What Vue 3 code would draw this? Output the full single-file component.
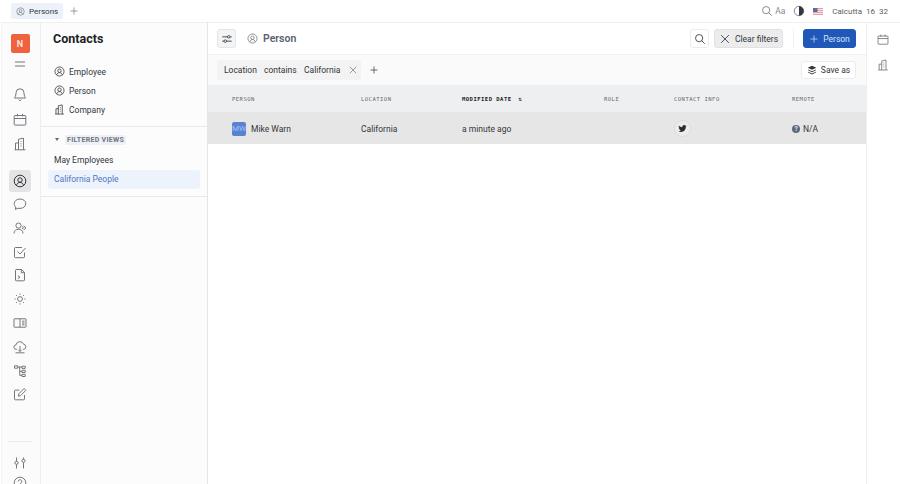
<script setup>
const railTop = [
  { name: 'bell', d: 'M7 1.8a4 4 0 0 0-4 4c0 3.4-1.2 4.6-1.7 5.2h11.400c-.5-.6-1.700-1.800-1.700-5.200a4 4 0 0 0-4-4zM5.700 12.600a1.400 1.400 0 0 0 2.600 0' },
  { name: 'calendar', d: 'M2 3.500h10a.8.8 0 0 1 .8.8v8a.8.8 0 0 1-.8.8H2a.8.8 0 0 1-.8-.8v-8a.8.8 0 0 1 .8-.8zM1.200 6.500h11.600M4.500 1.800v2.600M9.500 1.800v2.600' },
  { name: 'building', d: 'M5.500 12.800V2.200l5-1v11.600M5.500 6H2.500v6.800M1.500 12.800h11M7.500 4.500h1M7.500 6.800h1M7.500 9.100h1' },
]
const railMain = [
  { name: 'chat', d: 'M7 2C3.700 2 1.200 4 1.200 6.700c0 1.300.6 2.500 1.700 3.300L2.300 12.400l2.700-1.200c.6.200 1.300.2 2 .2 3.300 0 5.800-2 5.800-4.700S10.300 2 7 2z' },
  { name: 'users', d: 'M5.500 2a2.600 2.600 0 1 0 0 5.200 2.600 2.600 0 0 0 0-5.200zM1 12.500c0-2.700 2-4.200 4.500-4.200s4.500 1.500 4.500 4.200M10.500 4.800l2.500 2-2.500 2.200M9 5.500l1.500 1.300L9 8' },
  { name: 'check', d: 'M11.500 7.500v4.300a.9.9 0 0 1-.9.9H2.400a.9.9 0 0 1-.9-.9V3.400a.9.9 0 0 1 .9-.9h6.600M4.500 6.500l2.500 2.500 5.500-6' },
  { name: 'file', d: 'M3 1.500h5.500L11.500 4.500v7.500a.8.8 0 0 1-.8.8H3.300a.8.8 0 0 1-.8-.8V2.300a.8.8 0 0 1 .5-.8zM8.300 1.500v3.200h3.200M4.800 7.800l2.200 1.400-2.200 1.500' },
  { name: 'sun', d: 'M7 4.600a2.400 2.400 0 1 0 0 4.800 2.400 2.400 0 0 0 0-4.800zM7 1.500v1.200M7 11.300v1.200M1.500 7h1.200M11.300 7h1.200M3.100 3.100l.9.9M10 10l.9.9M3.100 10.900l.9-.9M10 4l.9-.9' },
  { name: 'book', d: 'M1.500 2.800h11a.5.5 0 0 1 .5.5v7.400a.5.5 0 0 1-.5.5h-11a.5.5 0 0 1-.5-.5V3.300a.5.5 0 0 1 .5-.5zM7 2.800v8.400M9 5.200h2.500M9 7h2.500M9 8.800h2.500' },
  { name: 'cloud', d: 'M4 9.300H3.200a2.200 2.200 0 0 1-.2-4.400A3.900 3.900 0 0 1 10.500 4.200a2.600 2.600 0 0 1 .4 5.100H10M7 6v5.500M5.400 9.800L7 11.500l1.600-1.700M2.500 12.800h9' },
  { name: 'tree', d: 'M1.500 1.800h3.200v2.400H1.500zM9 2.200h3.200v2.200H9zM9 6.300h3.200v2.200H9zM9 10.300h3.200v2.200H9zM4.700 3h4.300M6.700 3v8.400H9M6.700 7.400H9' },
  { name: 'edit', d: 'M11.500 8v3.900a.9.900 0 0 1-.9.9H2.400a.9.900 0 0 1-.9-.9V4a.9.900 0 0 1 .9-.9h3.900M5.300 9.100l.5-2.300 5.300-5.300 1.800 1.800-5.300 5.300z' },
]
const personIcon = 'M7 1.200a5.800 5.800 0 1 0 0 11.600A5.800 5.800 0 0 0 7 1.200zM7 3.800a2.200 2.200 0 1 0 0 4.400 2.200 2.200 0 0 0 0-4.400zM3.400 11.400c.4-1.700 1.900-3 3.600-3s3.200 1.300 3.600 3'
const buildingIcon = 'M5.500 12.800V2.200l5-1v11.600M5.500 6H2.500v6.800M1.500 12.800h11M7.500 4.500h1M7.500 6.800h1M7.500 9.100h1'
const calendarIcon = 'M2 3.500h10a.8.8 0 0 1 .8.8v8a.8.8 0 0 1-.8.8H2a.8.8 0 0 1-.8-.8v-8a.8.8 0 0 1 .8-.8zM1.200 6.500h11.600M4.500 1.800v2.600M9.500 1.800v2.600'
const slidersIcon = 'M1.500 4.500h6M10.500 4.500h2M1.500 9.500h2M6.500 9.500h6M9 3a1.500 1.500 0 1 0 0 3 1.500 1.500 0 0 0 0-3zM5 8a1.500 1.500 0 1 0 0 3 1.500 1.500 0 0 0 0-3z'
const searchIcon = 'M6 1.800a4.200 4.200 0 1 0 0 8.400 4.200 4.200 0 0 0 0-8.400zM9.100 9.100l3.400 3.400'
const crossIcon = 'M2.500 2.500l9 9M11.500 2.500l-9 9'
const plusIcon = 'M7 2v10M2 7h10'
const views = [
  { label: 'Employee', icon: personIcon },
  { label: 'Person', icon: personIcon },
  { label: 'Company', icon: buildingIcon },
]
</script>

<template>
  <div class="page">
    <header class="topbar">
      <div class="tab">
        <svg class="ic12" viewBox="0 0 14 14"><path :d="personIcon" /></svg>
        <span>Persons</span>
      </div>
      <svg class="ic10 tab-plus" viewBox="0 0 14 14"><path :d="plusIcon" /></svg>
      <div class="top-right">
        <svg class="ic12" viewBox="0 0 14 14"><path :d="searchIcon" /></svg>
        <span class="aa">Aa</span>
        <svg class="ic12 contrast" viewBox="0 0 14 14">
          <circle cx="7" cy="7" r="5.500" />
          <path class="solid" d="M7 1.500a5.500 5.500 0 0 1 0 11z" />
        </svg>
        <svg class="flag" viewBox="0 0 10 7">
          <rect width="10" height="7" fill="#e2a0a6" />
          <rect y="1" width="10" height="1" fill="#f3e8e8" />
          <rect y="3" width="10" height="1" fill="#f3e8e8" />
          <rect y="5" width="10" height="1" fill="#f3e8e8" />
          <rect width="4.500" height="4" fill="#5d6d9c" />
        </svg>
        <div class="clock">
          <span>Calcutta</span>
          <span>16</span>
          <span>32</span>
        </div>
      </div>
    </header>

    <div class="shell">
      <nav class="rail">
        <div class="logo">N</div>
        <svg class="ic14 burger" viewBox="0 0 14 14"><path d="M2 5h10M2 9h10" /></svg>
        <div class="rail-group first">
          <svg v-for="i in railTop" :key="i.name" class="ic14" viewBox="0 0 14 14"><path :d="i.d" /></svg>
        </div>
        <div class="rail-active">
          <svg class="ic14 dark" viewBox="0 0 14 14"><path :d="personIcon" /></svg>
        </div>
        <div class="rail-group">
          <svg v-for="i in railMain" :key="i.name" class="ic14" viewBox="0 0 14 14"><path :d="i.d" /></svg>
        </div>
        <div class="rail-bottom">
          <svg class="ic14" viewBox="0 0 14 14"><path d="M3.500 1.500v4M3.500 8.500v4M10.500 1.500v2M10.500 6.500v6M3.500 5.200a1.600 1.600 0 1 0 0 3.200 1.600 1.600 0 0 0 0-3.200zM10.500 3.200a1.600 1.600 0 1 0 0 3.200 1.600 1.600 0 0 0 0-3.200z" /></svg>
          <svg class="ic14" viewBox="0 0 14 14"><path d="M7 1.200a5.800 5.800 0 1 0 0 11.600A5.800 5.800 0 0 0 7 1.200zM5.200 5.500a1.800 1.800 0 1 1 2.800 1.500c-.6.400-1 .8-1 1.500M7 10v.5" /></svg>
        </div>
      </nav>

      <aside class="sidebar">
        <h1>Contacts</h1>
        <ul class="side-list">
          <li v-for="v in views" :key="v.label">
            <svg class="ic12 dark" viewBox="0 0 14 14"><path :d="v.icon" /></svg>
            {{ v.label }}
          </li>
        </ul>
        <section class="filtered">
          <div class="filtered-head">
            <i class="caret"></i>
            <span>FILTERED VIEWS</span>
          </div>
          <div class="view-row">May Employees</div>
          <div class="view-row selected">California People</div>
        </section>
      </aside>

      <main class="main">
        <div class="toolbar">
          <button class="btn square tinted">
            <svg class="ic12 dark" viewBox="0 0 14 14"><path :d="slidersIcon" /></svg>
          </button>
          <svg class="ic12 title-icon" viewBox="0 0 14 14"><path :d="personIcon" /></svg>
          <span class="title">Person</span>
          <button class="btn square push">
            <svg class="ic12 dark" viewBox="0 0 14 14"><path :d="searchIcon" /></svg>
          </button>
          <button class="btn clear">
            <svg class="ic12 dark" viewBox="0 0 14 14"><path :d="crossIcon" /></svg>
            Clear filters
          </button>
          <span class="sep"></span>
          <button class="btn primary">
            <svg class="ic10 light" viewBox="0 0 14 14"><path :d="plusIcon" /></svg>
            Person
          </button>
        </div>

        <div class="filterbar">
          <div class="chip">
            <span class="chip-field">Location</span>
            <span class="chip-op">contains</span>
            <span class="chip-value">California</span>
            <svg class="ic10" viewBox="0 0 14 14"><path :d="crossIcon" /></svg>
          </div>
          <svg class="ic10 dark chip-plus" viewBox="0 0 14 14"><path :d="plusIcon" /></svg>
          <button class="btn save">
            <svg class="ic10 dark" viewBox="0 0 14 14"><path class="solid" d="M7 1l6 2.800-6 2.800-6-2.800zM1.500 6.200L7 8.800l5.500-2.600v1.300L7 10.100 1.500 7.500zM1.500 9.300L7 11.900l5.500-2.600v1.300L7 13.200l-5.500-2.600z" /></svg>
            Save as
          </button>
        </div>

        <div class="table">
          <div class="tr head">
            <div>PERSON</div>
            <div>LOCATION</div>
            <div class="sorted">MODIFIED DATE <span class="sort">&#8645;</span></div>
            <div>ROLE</div>
            <div>CONTACT INFO</div>
            <div>REMOTE</div>
          </div>
          <div class="tr row">
            <div class="person">
              <span class="avatar">MW</span>
              Mike Warn
            </div>
            <div>California</div>
            <div>a minute ago</div>
            <div></div>
            <div>
              <span class="social">
                <svg viewBox="0 0 24 24"><path class="solid" d="M23 5.100c-.8.400-1.700.6-2.600.7.900-.6 1.600-1.400 2-2.500-.9.500-1.900.9-2.900 1.100a4.500 4.500 0 0 0-7.800 4.100C7.900 8.300 4.600 6.500 2.400 3.800c-1.200 2.100-.6 4.800 1.400 6.100-.7 0-1.400-.2-2-.6 0 2.200 1.500 4.100 3.600 4.500-.7.200-1.400.2-2 .1.600 1.800 2.300 3.100 4.200 3.200A9.100 9.100 0 0 1 1 19c2 1.300 4.400 2 6.900 2 8.300 0 13-7 12.700-13.300.9-.7 1.700-1.500 2.400-2.600z" /></svg>
              </span>
            </div>
            <div class="remote">
              <span class="help">?</span>
              N/A
            </div>
          </div>
        </div>
      </main>

      <aside class="right-rail">
        <svg class="ic12" viewBox="0 0 14 14"><path :d="calendarIcon" /></svg>
        <svg class="ic12" viewBox="0 0 14 14"><path :d="buildingIcon" /></svg>
      </aside>
    </div>
  </div>
</template>

<style scoped>
.page {
  width: 900px;
  height: 484px;
  overflow: hidden;
  display: flex;
  flex-direction: column;
  background: #fff;
  color: #33373d;
  font-family: Roboto, "Liberation Sans", sans-serif;
  font-size: 8.500px;
}
svg {
  flex: none;
  display: block;
  fill: none;
  stroke: #73777d;
  stroke-width: 1;
}
svg .solid {
  fill: currentColor;
  stroke: none;
}
.ic10 { width: 10px; height: 10px; }
.ic12 { width: 12px; height: 12px; }
.ic14 { width: 14px; height: 14px; }
.dark { stroke: #33373d; color: #33373d; }
.light { stroke: #dbe6fa; }

.topbar {
  height: 22px;
  flex: none;
  display: flex;
  align-items: center;
  padding: 0 12px 0 11px;
}
.tab {
  height: 16px;
  width: 52px;
  padding-left: 5px;
  box-sizing: border-box;
  display: flex;
  align-items: center;
  gap: 4px;
  background: #edf2fa;
  border-radius: 2px;
  font-size: 8px;
}
.tab .ic12 { width: 9px; height: 9px; }
.tab-plus { margin-left: 6px; }
.top-right {
  margin-left: auto;
  display: flex;
  align-items: center;
  color: #5a5e64;
}
.aa { margin-left: 2px; font-size: 8.500px; color: #85898e; }
.contrast { margin-left: 8px; color: #33373d; }
.flag { width: 10px; height: 7px; margin-left: 8px; stroke: none; }
.clock {
  margin-left: 9px;
  display: flex;
  gap: 4px;
  font-size: 8px;
}

.shell {
  flex: 1;
  display: flex;
  min-height: 0;
  margin-left: 1px;
}
.rail {
  width: 40px;
  flex: none;
  box-sizing: border-box;
  display: flex;
  flex-direction: column;
  align-items: center;
  background: #fbfbfb;
  border-top: 1px solid #efefef;
  border-right: 1px solid #ededed;
  border-left: 1px solid #f3f3f3;
  padding: 11px 2px 0 0;
}
.logo {
  width: 19px;
  height: 19px;
  flex: none;
  border-radius: 2px;
  background: #f0613f;
  color: #fde7df;
  font-size: 9px;
  font-weight: 600;
  display: flex;
  align-items: center;
  justify-content: center;
}
.burger { margin-top: 4px; }
.rail-group {
  display: flex;
  flex-direction: column;
  align-items: center;
  gap: 9.800px;
  margin-top: 5px;
}
.rail-group.first {
  margin-top: 16px;
  gap: 11px;
}
.rail-active {
  width: 22px;
  height: 22px;
  flex: none;
  margin-top: 19px;
  border-radius: 3px;
  background: #e4e4e4;
  display: flex;
  align-items: center;
  justify-content: center;
}
.rail-bottom {
  margin-top: 40px;
  width: 24px;
  padding-top: 14px;
  border-top: 1px solid #ececec;
  display: flex;
  flex-direction: column;
  align-items: center;
  gap: 6px;
}

.sidebar {
  width: 167px;
  flex: none;
  box-sizing: border-box;
  background: #fcfcfc;
  border-top: 1px solid #efefef;
  border-right: 1px solid #e6e6e6;
}
.sidebar h1 {
  margin: 0;
  padding: 7px 0 0 12px;
  font-size: 12.500px;
  line-height: 18px;
  font-weight: 700;
  color: #1c1f24;
}
.side-list {
  list-style: none;
  margin: 0;
  padding: 14px 0 7px 13px;
  border-bottom: 1px solid #e9e9e9;
}
.side-list li {
  height: 19px;
  display: flex;
  align-items: center;
  gap: 4px;
}
.side-list .ic12 { width: 11px; height: 11px; }
.filtered {
  padding: 6px 7px 7px;
  border-bottom: 1px solid #e9e9e9;
}
.filtered-head {
  height: 13px;
  display: flex;
  align-items: center;
  gap: 6px;
  margin: 0 0 5px 7px;
}
.caret {
  width: 0;
  height: 0;
  border: 2px solid transparent;
  border-top: 3px solid #666;
  border-bottom: 0;
}
.filtered-head span {
  padding: 1px 2px;
  background: #eef0f5;
  border-radius: 2px;
  color: #6e7480;
  font-size: 7px;
  font-weight: 700;
  letter-spacing: 0.300px;
}
.view-row {
  height: 19px;
  line-height: 19px;
  padding-left: 6px;
  border-radius: 3px;
}
.view-row.selected {
  background: #edf3fc;
  color: #4f77c4;
}

.main {
  flex: 1;
  min-width: 0;
  display: flex;
  flex-direction: column;
  border-top: 1px solid #efefef;
}
.toolbar {
  height: 32px;
  flex: none;
  box-sizing: border-box;
  padding: 6px 10px 0 9px;
  display: flex;
  align-items: flex-start;
  border-bottom: 1px solid #f1f1f1;
}
.btn {
  height: 19px;
  box-sizing: border-box;
  padding: 0;
  display: flex;
  align-items: center;
  justify-content: center;
  border: 1px solid #ececec;
  border-radius: 3px;
  background: #fff;
  color: #33373d;
  font-family: inherit;
  font-size: 8.500px;
}
.square { width: 19px; }
.tinted { background: #f3f4f6; border-color: #e4e5e8; }
.title-icon { margin: 4px 0 0 11px; width: 11px; height: 11px; }
.title {
  margin: 2px 0 0 5px;
  font-size: 10.500px;
  line-height: 15px;
  font-weight: 600;
  color: #5a6070;
}
.push { margin-left: auto; }
.clear {
  width: 69px;
  margin-left: 5px;
  gap: 4px;
  background: #ececec;
  border-color: #e2e2e2;
}
.sep {
  width: 1px;
  height: 19px;
  margin: 0 9px 0 10px;
  background: #f0f0f0;
}
.primary {
  width: 53px;
  gap: 4px;
  background: #1f58b8;
  border-color: #1f58b8;
  color: #d6e3fa;
}

.filterbar {
  height: 30px;
  flex: none;
  box-sizing: border-box;
  padding: 0 10px 0 9px;
  display: flex;
  align-items: center;
  background: #fafafa;
}
.chip {
  width: 144px;
  height: 20px;
  box-sizing: border-box;
  padding-left: 7px;
  display: flex;
  align-items: center;
  background: #f3f3f3;
  border-radius: 2px;
}
.chip-field, .chip-op { width: 40px; }
.chip-value { width: 44px; }
.chip-plus { margin-left: 8px; }
.save {
  width: 55px;
  height: 18px;
  margin-left: auto;
  gap: 4px;
}

.table { flex: none; }
.tr {
  display: grid;
  grid-template-columns: 129px 101px 142px 70px 118px 1fr;
  align-items: center;
  padding-left: 24px;
}
.head {
  height: 28px;
  box-sizing: border-box;
  background: #eeeff1;
  border-bottom: 1px solid #e4e4e6;
  font-family: "DejaVu Sans Mono", "Liberation Mono", monospace;
  font-size: 5.500px;
  letter-spacing: 0.500px;
  color: #65686d;
}
.sorted { font-weight: 700; color: #222; }
.sort { margin-left: 3px; font-size: 6px; font-weight: 400; }
.row {
  height: 31px;
  background: #e6e6e6;
}
.person {
  display: flex;
  align-items: center;
  gap: 5px;
}
.avatar {
  width: 14px;
  height: 14px;
  flex: none;
  border-radius: 2px;
  background: #5a82d2;
  color: #a9c0ee;
  font-size: 8px;
  line-height: 14px;
  text-align: center;
  white-space: nowrap;
}
.social {
  width: 17px;
  height: 17px;
  border-radius: 50%;
  background: #ececec;
  border: 1px solid #dcdcdc;
  box-sizing: border-box;
  display: flex;
  align-items: center;
  justify-content: center;
  color: #2a2c30;
}
.social svg { width: 9px; height: 9px; stroke: none; }
.remote {
  display: flex;
  align-items: center;
  gap: 3px;
}
.help {
  width: 8px;
  height: 8px;
  border-radius: 50%;
  background: #5b6b7d;
  color: #e6e6e6;
  font-size: 6.500px;
  font-weight: 700;
  line-height: 8px;
  text-align: center;
}

.right-rail {
  width: 34px;
  flex: none;
  box-sizing: border-box;
  padding: 10px 2px 0 0;
  display: flex;
  flex-direction: column;
  align-items: center;
  gap: 14px;
  border-left: 1px solid #efefef;
  border-top: 1px solid #efefef;
}
</style>
